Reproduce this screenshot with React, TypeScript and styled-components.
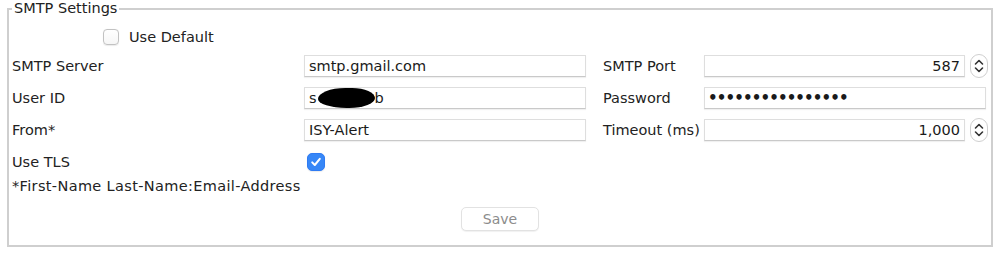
import styled, { createGlobalStyle } from "styled-components";

const GlobalStyle = createGlobalStyle`
  html, body {
    margin: 0;
    padding: 0;
    background: #fff;
  }
  body {
    font-family: "DejaVu Sans", "Liberation Sans", sans-serif;
    font-size: 14.5px;
    color: #222;
  }
`;

// Рамка с заголовком
const Group = styled.fieldset`
  margin: 0 7px;
  padding: 9px 3px 14px 3px;
  border: 2px solid #cfcfcf;
  min-width: 0;
`;

const Title = styled.legend`
  padding: 0 2px;
  margin-left: 0;
  line-height: 17px;
  color: #222;
`;

const DefaultRow = styled.label`
  display: flex;
  align-items: center;
  gap: 10px;
  height: 22px;
  padding-left: 91px;
`;

const Box = styled.span<{ $checked?: boolean }>`
  width: 16px;
  height: 16px;
  box-sizing: border-box;
  border-radius: 4px;
  display: inline-flex;
  align-items: center;
  justify-content: center;
  border: 1px solid ${(p) => (p.$checked ? "#2f7bf3" : "#c2c2c2")};
  background: ${(p) => (p.$checked ? "#3787f7" : "linear-gradient(#fff, #f6f6f6)")};
  box-shadow: 0 0.5px 1px rgba(0, 0, 0, 0.08);
`;

const FormGrid = styled.div`
  display: grid;
  grid-template-columns: 292px 282px 118px 282px;
  grid-auto-rows: 22px;
  row-gap: 10px;
  margin-top: 7px;
`;

const Label = styled.div<{ $right?: boolean }>`
  display: flex;
  align-items: center;
  padding-left: ${(p) => (p.$right ? "17px" : "0")};
  white-space: nowrap;
`;

const Field = styled.div<{ $number?: boolean }>`
  box-sizing: border-box;
  height: 22px;
  display: flex;
  align-items: center;
  justify-content: ${(p) => (p.$number ? "flex-end" : "flex-start")};
  padding: 0 4px;
  background: #fff;
  border: 1px solid #dedede;
  border-bottom-color: #c9c9c9;
  box-shadow: 0 1px 1px rgba(0, 0, 0, 0.06);
  color: #1a1a1a;
  white-space: nowrap;
  overflow: hidden;
`;

const FieldWithSpin = styled.div`
  display: flex;
  align-items: center;
  gap: 5px;
  width: 284px;

  ${Field} {
    flex: 1;
  }
`;

const Redaction = styled.span`
  display: inline-block;
  width: 57px;
  height: 20px;
  margin: 0 0 0 1px;
  background: #000;
  border-radius: 48% 40% 45% 50% / 55% 50% 50% 45%;
`;

const Dots = styled.span`
  font-size: 15px;
  font-weight: bold;
  letter-spacing: -0.85px;
  margin-left: -1px;
`;

const CheckCell = styled.div`
  display: flex;
  align-items: center;
  padding-left: 3px;

  ${Box} {
    width: 18px;
    height: 18px;
    border-radius: 5px;
  }
`;

const Note = styled.div`
  height: 20px;
  line-height: 20px;
  margin-top: 3px;
  letter-spacing: 0.35px;
`;

const Actions = styled.div`
  display: flex;
  justify-content: center;
  margin-top: 11px;
`;

const SaveButton = styled.button`
  width: 78px;
  height: 24px;
  font-family: inherit;
  font-size: 14px;
  color: #8c8c8c;
  background: #fff;
  border: 1px solid #e2e2e2;
  border-radius: 5px;
  box-shadow: 0 1px 1px rgba(0, 0, 0, 0.06);
  padding: 0;
`;

function Spinner() {
  return (
    <svg width="18" height="24" viewBox="0 0 18 24">
      <rect x="0.5" y="0.5" width="17" height="23" rx="8.5" fill="#fff" stroke="#cfcfcf" />
      <path d="M5.5 10 L9 6.5 L12.5 10" fill="none" stroke="#333" strokeWidth="1.6" strokeLinecap="round" strokeLinejoin="round" />
      <path d="M5.5 14 L9 17.5 L12.5 14" fill="none" stroke="#333" strokeWidth="1.6" strokeLinecap="round" strokeLinejoin="round" />
    </svg>
  );
}

function Check() {
  return (
    <svg width="12" height="12" viewBox="0 0 12 12">
      <path d="M2.2 6.4 L4.8 9 L9.8 2.8" fill="none" stroke="#fff" strokeWidth="2" strokeLinecap="round" strokeLinejoin="round" />
    </svg>
  );
}

export default function App() {
  return (
    <>
      <GlobalStyle />
      <Group>
        <Title>SMTP Settings</Title>

        <DefaultRow>
          <Box />
          Use Default
        </DefaultRow>

        <FormGrid>
          <Label>SMTP Server</Label>
          <Field>smtp.gmail.com</Field>
          <Label $right>SMTP Port</Label>
          <FieldWithSpin>
            <Field $number>587</Field>
            <Spinner />
          </FieldWithSpin>

          <Label>User ID</Label>
          <Field>
            s<Redaction />b
          </Field>
          <Label $right>Password</Label>
          <Field>
            <Dots>{"•".repeat(16)}</Dots>
          </Field>

          <Label>From*</Label>
          <Field>ISY-Alert</Field>
          <Label $right>Timeout (ms)</Label>
          <FieldWithSpin>
            <Field $number>1,000</Field>
            <Spinner />
          </FieldWithSpin>

          <Label>Use TLS</Label>
          <CheckCell>
            <Box $checked>
              <Check />
            </Box>
          </CheckCell>
        </FormGrid>

        <Note>*First-Name Last-Name:Email-Address</Note>

        <Actions>
          <SaveButton disabled>Save</SaveButton>
        </Actions>
      </Group>
    </>
  );
}
